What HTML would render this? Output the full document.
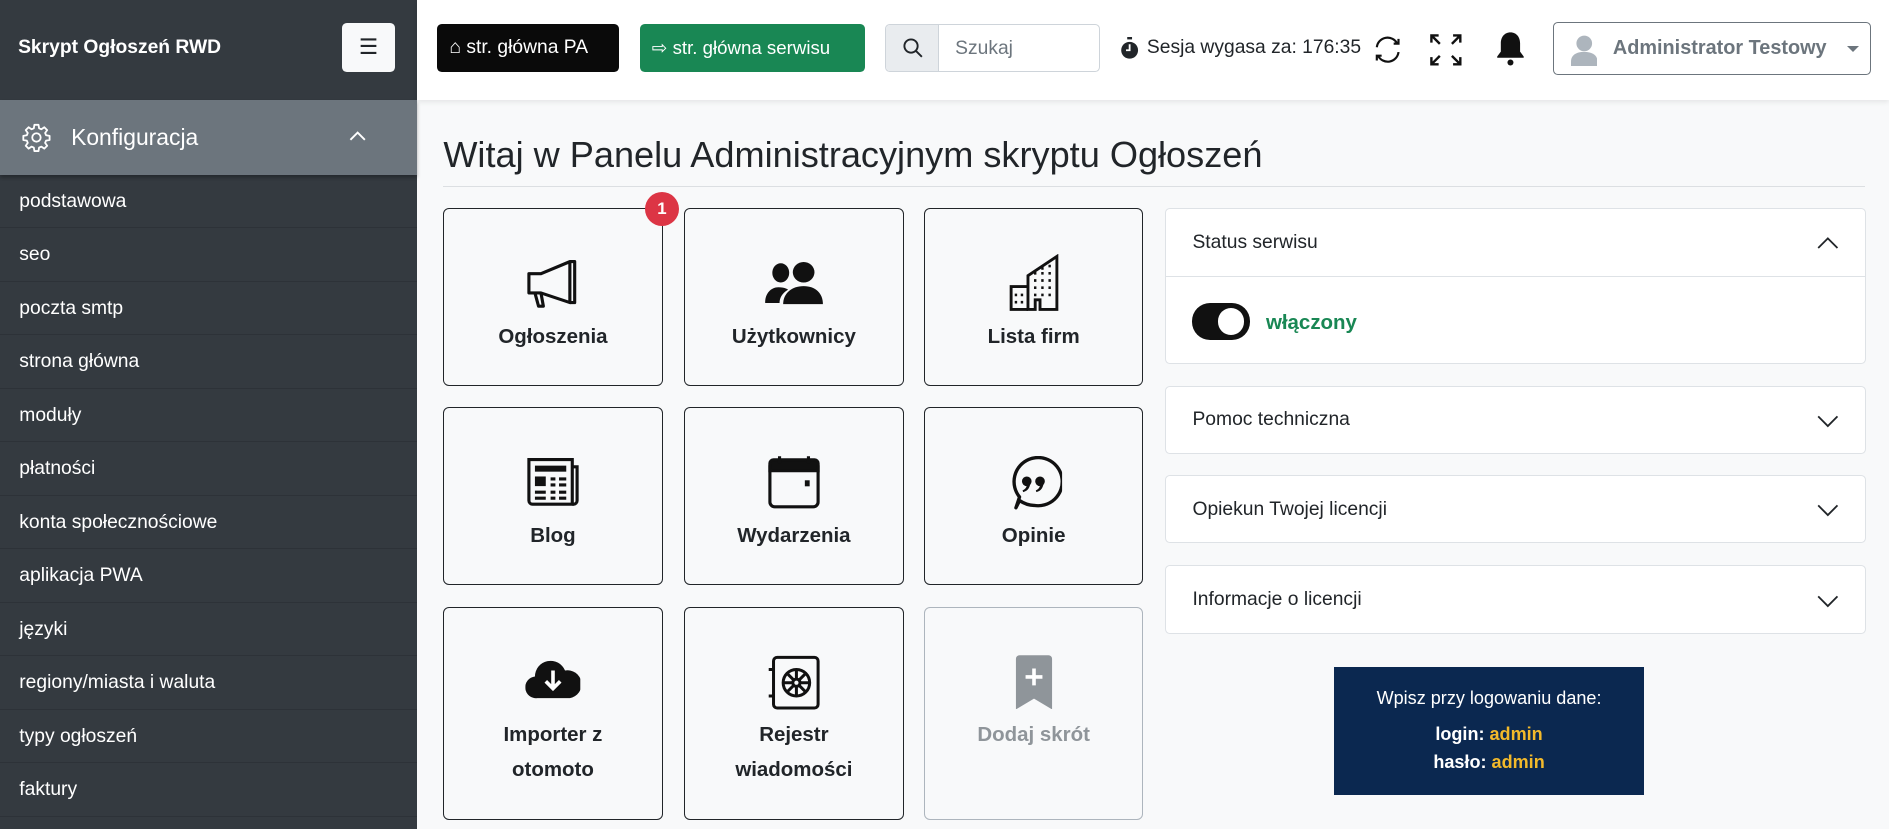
<!DOCTYPE html>
<html><head><meta charset="utf-8"><style>
*{box-sizing:border-box;margin:0;padding:0}
html,body{width:1889px;height:829px;overflow:hidden;background:#f8f9fa}
#w{zoom:1.20472;width:1568px;height:688px;position:relative;font-family:"Liberation Sans",sans-serif;color:#212529;background:#f8f9fa;overflow:hidden}
.a{position:absolute}
#side{left:0;top:0;width:346px;height:688px;background:#343a40}
.mi{position:absolute;left:0;width:346px;height:44.4px;border-bottom:1px solid #2d3238;color:#fff;font-size:16px;padding-left:16px;line-height:44px}
#hdr{left:346px;top:0;width:1222px;height:83px;background:#fff;box-shadow:0 2px 4px rgba(0,0,0,.08)}
.btn{position:absolute;top:20px;height:40px;border-radius:4px;color:#fff;font-size:16px;line-height:40px;padding-left:10px}
.tile{position:absolute;width:182px;border:1px solid #212529;border-radius:5px;background:#f8f9fa;text-align:center;font-weight:bold;font-size:17px;line-height:29px}
.tile svg{position:absolute;left:50%;transform:translateX(-50%)}
.card{position:absolute;left:967px;width:582px;background:#fff;border:1px solid #dee2e6;border-radius:4px;font-size:16px;color:#212529}
.card .t{position:absolute;left:22px}
.chev{position:absolute;right:22px}
</style></head><body><div id="w">
<div id="side" class="a">
 <div class="a" style="left:15px;top:31px;color:#fff;font-weight:bold;font-size:16px">Skrypt Ogłoszeń RWD</div>
 <div class="a" style="left:284px;top:19px;width:44px;height:41px;background:#f8f9fa;border-radius:4px;text-align:center;line-height:40px;font-size:18px;color:#212529">☰</div>
 <div class="a" style="left:0;top:83px;width:346px;height:62px;background:#6c757d;box-shadow:0 2px 3px rgba(0,0,0,.3)">
  <svg class="a" style="left:18px;top:19px" width="24" height="24" viewBox="0 0 24 24" fill="none" stroke="#fff" stroke-width="1.5" stroke-linejoin="round"><circle cx="12" cy="12" r="3.5"/><path d="M10.3 1.5h3.4l.5 2.9 1.9.8 2.4-1.7 2.4 2.4-1.7 2.4.8 1.9 2.9.5v3.4l-2.9.5-.8 1.9 1.7 2.4-2.4 2.4-2.4-1.7-1.9.8-.5 2.9h-3.4l-.5-2.9-1.9-.8-2.4 1.7-2.4-2.4 1.7-2.4-.8-1.9-2.9-.5v-3.4l2.9-.5.8-1.9-1.7-2.4 2.4-2.4 2.4 1.7 1.9-.8z"/></svg>
  <div class="a" style="left:59px;top:20px;color:#fff;font-size:19px">Konfiguracja</div>
  <svg class="a" style="left:289px;top:24px" width="16" height="12" viewBox="0 0 16 12" fill="none" stroke="#fff" stroke-width="1.6"><path d="M2 9l6-6 6 6"/></svg>
 </div>
 <div class="mi" style="top:145px">podstawowa</div>
 <div class="mi" style="top:189.4px">seo</div>
 <div class="mi" style="top:233.8px">poczta smtp</div>
 <div class="mi" style="top:278.2px">strona główna</div>
 <div class="mi" style="top:322.6px">moduły</div>
 <div class="mi" style="top:367px">płatności</div>
 <div class="mi" style="top:411.4px">konta społecznościowe</div>
 <div class="mi" style="top:455.8px">aplikacja PWA</div>
 <div class="mi" style="top:500.2px">języki</div>
 <div class="mi" style="top:544.6px">regiony/miasta i waluta</div>
 <div class="mi" style="top:589px">typy ogłoszeń</div>
 <div class="mi" style="top:633.4px">faktury</div>
</div>
<div id="hdr" class="a"></div>
<div class="btn" style="left:363px;width:151px;background:#0a0a0a">⌂ str. główna PA</div>
<div class="btn" style="left:531px;width:187px;background:#198754;font-size:15.5px">⇨ str. główna serwisu</div>
<div class="a" style="left:735px;top:20px;width:178px;height:40px;border:1px solid #ced4da;border-radius:4px;background:#fff;overflow:hidden">
 <div class="a" style="left:0;top:0;width:44px;height:38px;background:#e9ecef;border-right:1px solid #ced4da">
  <svg class="a" style="left:13px;top:10px" width="18" height="18" viewBox="0 0 18 18" fill="none" stroke="#212529" stroke-width="1.6"><circle cx="7.5" cy="7.5" r="5.5"/><path d="M11.5 11.5l5 5"/></svg></div>
 <div class="a" style="left:57px;top:11px;color:#6c757d;font-size:16px">Szukaj</div>
</div>
<svg class="a" style="left:930px;top:31px" width="16" height="19" viewBox="0 0 16 19"><rect x="6" y="0" width="4" height="2" fill="#212529"/><circle cx="8" cy="11" r="7" fill="#212529"/><path d="M8 6v5H5" stroke="#fff" stroke-width="1.5" fill="none"/></svg>
<div class="a" style="left:952px;top:31px;font-size:16px">Sesja wygasa za: 176:35</div>
<svg class="a" style="left:1139px;top:28px" width="26" height="26" viewBox="0 0 26 26" fill="none" stroke="#111" stroke-width="1.8"><path d="M4 11a9 9 0 0 1 17-3M22 15a9 9 0 0 1-17 3"/><path d="M18 8h4V4M8 18H4v4"/></svg>
<svg class="a" style="left:1186px;top:27px" width="28" height="28" viewBox="0 0 28 28" fill="none" stroke="#111" stroke-width="2"><path d="M2 8V2h6M2 2l7 7M26 8V2h-6M26 2l-7 7M2 20v6h6M2 26l7-7M26 20v6h-6M26 26l-7-7"/></svg>
<svg class="a" style="left:1242px;top:25px" width="24" height="31" viewBox="0 0 24 31"><path d="M12 2c-5 0-8 4-8 9v7l-3 4v1h22v-1l-3-4v-7c0-5-3-9-8-9z" fill="#111"/><circle cx="12" cy="27" r="2.5" fill="#111"/></svg>
<div class="a" style="left:1289px;top:18px;width:264px;height:44px;border:1px solid #6c757d;border-radius:4px;background:#fff">
 <svg class="a" style="left:14px;top:10px" width="22" height="26" viewBox="0 0 22 26" fill="#adb5bd"><circle cx="11" cy="7" r="6.5"/><path d="M0 26v-4c0-5 4-8 11-8s11 3 11 8v4z"/></svg>
 <div class="a" style="left:49px;top:12px;font-weight:bold;font-size:16.5px;color:#6c757d">Administrator Testowy</div>
 <div class="a" style="left:243px;top:19px;width:0;height:0;border-left:5px solid transparent;border-right:5px solid transparent;border-top:5px solid #6c757d"></div>
</div>
<div class="a" style="left:368px;top:111px;font-size:30px;color:#212529">Witaj w Panelu Administracyjnym skryptu Ogłoszeń</div>
<div class="a" style="left:368px;top:154px;width:1180px;height:1px;background:#dcdfe2"></div>

<div class="tile" style="left:368px;top:173px;height:147px"><svg style="top:40px" width="48" height="42" viewBox="0 0 48 42" fill="none" stroke="#111" stroke-width="2.6" stroke-linejoin="round"><path d="M4 13h10l24-10v34L14 29H4z"/><path d="M38 3h4v34h-4M9 29l3 11h4l-2-11"/></svg><div style="position:absolute;top:92px;width:100%">Ogłoszenia</div></div>
<div class="tile" style="left:568px;top:173px;height:147px"><svg style="top:44px" width="48" height="36" viewBox="0 0 48 36" fill="#111"><ellipse cx="13" cy="9" rx="7" ry="8"/><ellipse cx="32" cy="8.5" rx="9" ry="8.5"/><path d="M0 34c0-8 5-13 11-13s8 2 8 2c-5 3-7 7-7 11z"/><path d="M15 35c0-9 7-15 17-15s16 6 16 15z"/></svg><div style="position:absolute;top:92px;width:100%">Użytkownicy</div></div>
<div class="tile" style="left:767px;top:173px;height:147px"><svg style="top:37px" width="44" height="48" viewBox="0 0 44 48" fill="none" stroke="#111" stroke-width="2.4"><path d="M17 46V18l24-16v44H27v-8h-4v8z"/><path d="M17 27H3v19h14"/><g stroke-width="2.2"><path d="M22 16h2M28 16h2M34 16h2M22 22h2M28 22h2M34 22h2M22 28h2M28 28h2M34 28h2M22 34h2M28 34h2M34 34h2M6 34h2M11 34h2M6 40h2M11 40h2M28 12h2M34 10h2"/></g></svg><div style="position:absolute;top:92px;width:100%">Lista firm</div></div>
<div class="a" style="left:535px;top:159px;width:29px;height:29px;border-radius:50%;background:#dc3545;color:#fff;font-weight:bold;font-size:14px;text-align:center;line-height:29px">1</div>

<div class="tile" style="left:368px;top:338px;height:148px"><svg style="top:40px" width="46" height="42" viewBox="0 0 46 42" fill="none" stroke="#111" stroke-width="2.6"><path d="M3 3h36v37H6a3 3 0 0 1-3-3z"/><path d="M39 9h4v28a3 3 0 0 1-3 3h-1"/><rect x="8" y="8" width="26" height="5" fill="#111" stroke="none"/><rect x="8" y="17" width="9" height="8" fill="#111" stroke="none"/><path d="M21 19h4M28 19h6M21 24h4M28 24h6M8 30h9M21 30h4M28 30h6M8 35h9M21 35h4M28 35h6"/></svg><div style="position:absolute;top:92px;width:100%">Blog</div></div>
<div class="tile" style="left:568px;top:338px;height:148px"><svg style="top:39px" width="46" height="46" viewBox="0 0 46 46" fill="none" stroke="#111" stroke-width="2.6"><rect x="3" y="5" width="40" height="38" rx="4"/><path d="M3 7a3 3 0 0 1 3-3h34a3 3 0 0 1 3 3v6H3z" fill="#111"/><path d="M11 1v6M35 1v6"/><rect x="32" y="21" width="4" height="5" fill="#111" stroke="none"/></svg><div style="position:absolute;top:92px;width:100%">Wydarzenia</div></div>
<div class="tile" style="left:767px;top:338px;height:148px"><svg style="top:40px" width="48" height="46" viewBox="0 0 48 46" fill="none" stroke="#111" stroke-width="2.8"><path d="M9 43l3-9A20 20 0 1 1 24 41c-5 0-9-2-12-4z" stroke-linejoin="round"/><g fill="#111" stroke="none"><circle cx="18" cy="21" r="4"/><circle cx="29" cy="21" r="4"/><path d="M21 21c0 5-2 8-6 9l-.5-1.5c3-1 4-4 3.5-6.5zM32 21c0 5-2 8-6 9l-.5-1.5c3-1 4-4 3.5-6.5z"/></g></svg><div style="position:absolute;top:92px;width:100%">Opinie</div></div>

<div class="tile" style="left:368px;top:504px;height:177px"><svg style="top:40px" width="46" height="36" viewBox="0 0 46 36"><path d="M10 35a9 9 0 0 1-2-18A13 13 0 0 1 33 12a10 10 0 0 1 4 23z" fill="#111"/><path d="M23 12v15M17 21l6 6 6-6" stroke="#fff" stroke-width="3" fill="none"/></svg><div style="position:absolute;top:91px;width:100%">Importer z<br>otomoto</div></div>
<div class="tile" style="left:568px;top:504px;height:177px"><svg style="top:39px" width="46" height="46" viewBox="0 0 46 46" fill="none" stroke="#111" stroke-width="2.5"><rect x="6" y="2" width="37" height="42" rx="3"/><path d="M2 12h5M2 34h5"/><circle cx="25" cy="23" r="11"/><circle cx="25" cy="23" r="3"/><path d="M25 12v8M25 26v8M14 23h8M28 23h8M17 15l6 6M27 25l6 6M33 15l-6 6M23 25l-6 6"/></svg><div style="position:absolute;top:91px;width:100%">Rejestr<br>wiadomości</div></div>
<div class="tile" style="left:767px;top:504px;height:177px;border-color:#adb5bd;color:#8f959a"><svg style="top:38px" width="34" height="46" viewBox="0 0 34 46"><path d="M2 4a3 3 0 0 1 3-3h24a3 3 0 0 1 3 3v42L17 37 2 46z" fill="#8f959a"/><path d="M17 12v14M10 19h14" stroke="#fff" stroke-width="3"/></svg><div style="position:absolute;top:91px;width:100%">Dodaj skrót</div></div>

<div class="card" style="top:173px;height:129px">
 <div class="a" style="left:0;top:0;width:100%;height:56px;border-bottom:1px solid #dee2e6"></div>
 <div class="t" style="top:19px">Status serwisu</div>
 <svg class="chev" style="top:22px" width="18" height="12" viewBox="0 0 18 12" fill="none" stroke="#212529" stroke-width="1.5"><path d="M1 10l8-8 8 8"/></svg>
 <div class="a" style="left:22px;top:78px;width:48px;height:30px;border-radius:15px;background:#111"><div class="a" style="left:21px;top:4px;width:22px;height:22px;border-radius:50%;background:#fff"></div></div>
 <div class="a" style="left:83px;top:84px;color:#198754;font-weight:bold;font-size:17px">włączony</div>
</div>
<div class="card" style="top:320px;height:57px"><div class="t" style="top:19px">Pomoc techniczna</div><svg class="chev" style="top:23px" width="18" height="12" viewBox="0 0 18 12" fill="none" stroke="#212529" stroke-width="1.5"><path d="M1 2l8 8 8-8"/></svg></div>
<div class="card" style="top:394px;height:57px"><div class="t" style="top:19px">Opiekun Twojej licencji</div><svg class="chev" style="top:23px" width="18" height="12" viewBox="0 0 18 12" fill="none" stroke="#212529" stroke-width="1.5"><path d="M1 2l8 8 8-8"/></svg></div>
<div class="card" style="top:469px;height:57px"><div class="t" style="top:19px">Informacje o licencji</div><svg class="chev" style="top:23px" width="18" height="12" viewBox="0 0 18 12" fill="none" stroke="#212529" stroke-width="1.5"><path d="M1 2l8 8 8-8"/></svg></div>

<div class="a" style="left:1107px;top:554px;width:258px;height:106px;background:#0b2850;color:#fff;text-align:center;font-size:15px">
 <div style="margin-top:17px">Wpisz przy logowaniu dane:</div>
 <div style="margin-top:10px;font-weight:bold;line-height:23px">login: <span style="color:#f2b92b">admin</span><br>hasło: <span style="color:#f2b92b">admin</span></div>
</div>
</div></body></html>
